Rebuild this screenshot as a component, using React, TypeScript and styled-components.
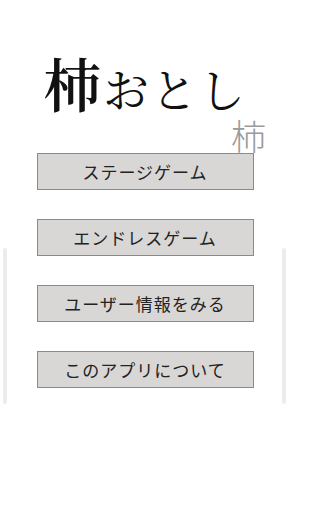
import styled, { createGlobalStyle } from "styled-components";

const GlobalStyle = createGlobalStyle`
  html, body {
    margin: 0;
    padding: 0;
    background: #ffffff;
  }
  body {
    font-family: "Noto Sans CJK JP", "Noto Sans", sans-serif;
  }
`;

const Screen = styled.div`
  position: relative;
  width: 289px;
  height: 512px;
  overflow: hidden;
  background: #ffffff;
`;

const Header = styled.header`
  display: flex;
  flex-direction: column;
  padding-top: 53px;
  height: 153px;
  box-sizing: border-box;
`;

const Title = styled.h1`
  margin: 0 0 0 1px;
  display: flex;
  justify-content: center;
  align-items: baseline;
  font-family: "Noto Serif CJK JP", "Noto Sans CJK JP", serif;
  font-weight: 400;
  color: #111111;
  line-height: 1;
`;

const Kaki = styled.span`
  font-size: 58px;
  font-weight: 600;
  margin-right: 2px;
`;

const Otoshi = styled.span`
  font-size: 46px;
  font-weight: 400;
  letter-spacing: 2px;
`;

const SubKaki = styled.span`
  align-self: flex-end;
  margin-right: 23px;
  margin-top: 6px;
  font-size: 35px;
  line-height: 1;
  font-weight: 300;
  color: #9a9a9a;
`;

const Menu = styled.nav`
  display: flex;
  flex-direction: column;
  align-items: center;
  gap: 29px;
`;

const MenuButton = styled.button`
  width: 217px;
  height: 37px;
  margin-left: 1px;
  padding: 0;
  border: 1px solid #8a8a8a;
  background: #d9d6d6;
  color: #222222;
  font-family: "Noto Sans CJK JP", "Noto Sans", sans-serif;
  font-size: 17px;
  letter-spacing: 1px;
  line-height: 35px;
  cursor: pointer;
`;

const SideBar = styled.div<{ $side: "left" | "right" }>`
  position: absolute;
  top: 248px;
  ${(p) => (p.$side === "left" ? "left: 3px;" : "right: 3px;")}
  width: 4px;
  height: 156px;
  border-radius: 2px;
  background: #ececec;
`;

const items = ["ステージゲーム", "エンドレスゲーム", "ユーザー情報をみる", "このアプリについて"];

export default function App() {
  return (
    <Screen>
      <GlobalStyle />
      <Header>
        <Title>
          <Kaki>柿</Kaki>
          <Otoshi>おとし</Otoshi>
        </Title>
        <SubKaki>柿</SubKaki>
      </Header>
      <Menu>
        {items.map((label) => (
          <MenuButton key={label}>{label}</MenuButton>
        ))}
      </Menu>
      <SideBar $side="left" />
      <SideBar $side="right" />
    </Screen>
  );
}
